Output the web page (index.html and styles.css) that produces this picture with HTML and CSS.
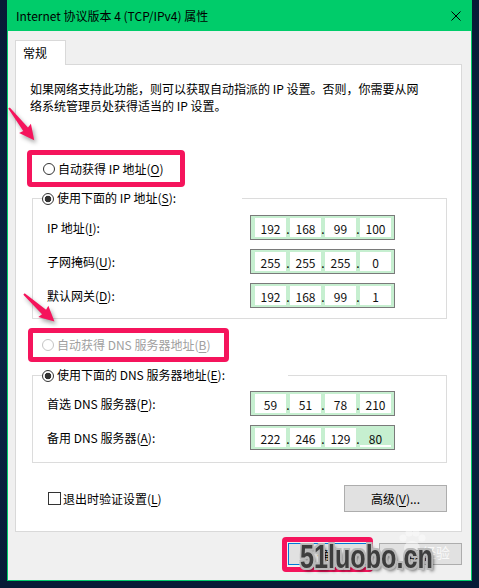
FILE: index.html
```html
<!DOCTYPE html>
<html lang="zh-CN">
<head>
  <meta charset="UTF-8">
  <title>Internet 协议版本 4 (TCP/IPv4) 属性</title>
  <link rel="stylesheet" href="styles.css">
</head>
<body>

  <div class="window">
    <div class="titlebar">
      <span class="title">Internet 协议版本 4 (TCP/IPv4) 属性</span>
      <svg class="close" width="10" height="10" viewBox="0 0 10 10"><path d="M0.5 0.5 L9.5 9.5 M9.5 0.5 L0.5 9.5" stroke="#000" stroke-width="1"/></svg>
    </div>

    <div class="client">
      <div class="tabs"><div class="tab">常规</div></div>

      <div class="panel">
        <p class="desc">如果网络支持此功能，则可以获取自动指派的 IP 设置。否则，你需要从网<br>络系统管理员处获得适当的 IP 设置。</p>

        <div class="opt auto-ip"><span class="radio"></span>自动获得 IP 地址(<u>O</u>)</div>

        <fieldset class="group g1">
          <legend><span class="radio on"></span>使用下面的 IP 地址(<u>S</u>):</legend>
          <div class="row">
            <span class="lbl">IP 地址(<u>I</u>):</span>
            <div class="ip"><span class="seg">192</span><span class="dot">.</span><span class="seg">168</span><span class="dot">.</span><span class="seg">99</span><span class="dot">.</span><span class="seg">100</span></div>
          </div>
          <div class="row">
            <span class="lbl">子网掩码(<u>U</u>):</span>
            <div class="ip"><span class="seg">255</span><span class="dot">.</span><span class="seg">255</span><span class="dot">.</span><span class="seg">255</span><span class="dot">.</span><span class="seg">0</span></div>
          </div>
          <div class="row">
            <span class="lbl">默认网关(<u>D</u>):</span>
            <div class="ip"><span class="seg">192</span><span class="dot">.</span><span class="seg">168</span><span class="dot">.</span><span class="seg">99</span><span class="dot">.</span><span class="seg">1</span></div>
          </div>
        </fieldset>

        <div class="opt dns-auto"><span class="radio off"></span>自动获得 DNS 服务器地址(<u>B</u>)</div>

        <fieldset class="group g2">
          <legend><span class="radio on"></span>使用下面的 DNS 服务器地址(<u>E</u>):</legend>
          <div class="row">
            <span class="lbl">首选 DNS 服务器(<u>P</u>):</span>
            <div class="ip"><span class="seg">59</span><span class="dot">.</span><span class="seg">51</span><span class="dot">.</span><span class="seg">78</span><span class="dot">.</span><span class="seg">210</span></div>
          </div>
          <div class="row">
            <span class="lbl">备用 DNS 服务器(<u>A</u>):</span>
            <div class="ip"><span class="seg">222</span><span class="dot">.</span><span class="seg">246</span><span class="dot">.</span><span class="seg">129</span><span class="dot">.</span><span class="seg sel">80</span></div>
          </div>
        </fieldset>

        <div class="foot">
          <label class="check"><span class="box"></span>退出时验证设置(<u>L</u>)</label>
          <button class="btn adv">高级(<u>V</u>)...</button>
        </div>
      </div>

      <div class="actions">
        <button class="btn ok">确定</button>
        <button class="btn">取消</button>
      </div>
    </div>
  </div>

  <!-- annotations drawn over the dialog -->
  <div class="mark m1"></div>
  <div class="mark m2"></div>
  <div class="mark m3"></div>

  <svg class="arrows" width="80" height="340" viewBox="0 0 80 340">
    <g transform="translate(9 108) rotate(52)">
      <path d="M0 -1 L27 -3 L26 -7.5 L41 0 L26 7.5 L27 3 L0 1 Z" fill="#f5145c"/>
    </g>
    <g transform="translate(24 294) rotate(42)">
      <path d="M0 -1 L27 -3 L26 -7.5 L41 0 L26 7.5 L27 3 L0 1 Z" fill="#f5145c"/>
    </g>
  </svg>

  <svg class="paw" width="30" height="30" viewBox="0 0 30 30">
    <circle cx="7" cy="9" r="3.5" fill="#fff"/>
    <circle cx="13" cy="4" r="3.5" fill="#fff"/>
    <circle cx="20" cy="4" r="3.5" fill="#fff"/>
    <circle cx="26" cy="9" r="3.5" fill="#fff"/>
    <ellipse cx="16" cy="19" rx="8" ry="7" fill="#fff"/>
  </svg>
  <span class="jy">经验</span>
  <span class="wm">51luobo.cn</span>

</body>
</html>
```

FILE: styles.css
```css
body {
  margin: 0;
  position: relative;
  height: 588px;
  overflow: hidden;
  background: linear-gradient(180deg, #071b36 0%, #0a2546 60%, #071b36 100%);
  font-family: "Noto Sans CJK SC", "Noto Sans", sans-serif;
  font-size: 12px;
  color: #000;
}

u {
  text-decoration-thickness: 1px;
  text-underline-offset: 2px;
}

.window {
  margin-left: 7px;
  width: 465px;
  height: 581px;
  box-sizing: border-box;
  border: 1px solid #00cc6a;
  background: #f0f0f0;
}

.titlebar {
  height: 30px;
  background: #00cc6a;
  display: flex;
  align-items: center;
  justify-content: space-between;
  padding: 0 10px 0 8px;
}

.title {
  line-height: 30px;
}

.client {
  padding: 9px 0 0 7px;
}

.tabs {
  height: 24px;
}

.tab {
  position: relative;
  z-index: 1;
  width: 51px;
  height: 25px;
  box-sizing: border-box;
  border: 1px solid #d9d9d9;
  border-bottom: none;
  background: #fff;
  padding-left: 7px;
  line-height: 23px;
}

.panel {
  width: 447px;
  height: 468px;
  box-sizing: border-box;
  border: 1px solid #d9d9d9;
  background: #fff;
  padding: 15px 14px 0 14px;
}

.desc {
  margin: 0;
  line-height: 17px;
}

.opt {
  display: flex;
  align-items: center;
  height: 18px;
  line-height: 18px;
  margin-left: 13px;
}

.auto-ip {
  margin-top: 46px;
}

.dns-auto {
  margin-top: 17px;
  margin-left: 12px;
  color: #a0a0a0;
}

.radio {
  display: inline-block;
  width: 12px;
  height: 12px;
  box-sizing: border-box;
  border: 1px solid #333;
  border-radius: 50%;
  background: #fff;
  margin-right: 3px;
  vertical-align: -2px;
}

.radio.on {
  background: radial-gradient(circle at center, #333 3px, #fff 3.6px);
}

.radio.off {
  border-color: #c4c4c4;
}

.group {
  margin: 11px 0 0 2px;
  padding: 0 0 10px 0;
  border: 1px solid #dcdcdc;
  min-width: 0;
}

.g2 {
  margin-top: 12px;
  padding-bottom: 12px;
}

.group legend {
  padding: 0;
  margin-left: 9px;
  height: 18px;
  line-height: 18px;
  width: 200px;
  white-space: nowrap;
}

.g2 legend {
  width: 246px;
}

.row {
  display: flex;
  align-items: center;
  height: 25px;
  margin: 9px 0 0 14px;
}

.g1 .row:first-of-type {
  margin-top: 8px;
}

.g2 .row:first-of-type {
  margin-top: 7px;
}

.lbl {
  width: 203px;
}

.ip {
  display: flex;
  width: 145px;
  height: 25px;
  box-sizing: border-box;
  border: 1px solid #7a7a7a;
  background: #c6efd0;
  padding: 2px 3px 2px 4px;
}

.seg {
  width: 31px;
  background: #fff;
  text-align: center;
  line-height: 21px;
  color: #111;
}

.seg.sel {
  background: linear-gradient(180deg, #c6efd0 0 17px, #fff 17px);
}

.dot {
  width: 4px;
  text-align: center;
  line-height: 21px;
}

.foot {
  display: flex;
  align-items: center;
  justify-content: space-between;
  margin: 22px 0 0 18px;
}

.check {
  display: flex;
  align-items: center;
}

.box {
  width: 13px;
  height: 13px;
  box-sizing: border-box;
  border: 1px solid #333;
  margin-right: 2px;
}

.btn {
  font: inherit;
  color: #000;
  background: #e1e1e1;
  border: 1px solid #adadad;
  padding: 0;
}

.adv {
  width: 103px;
  height: 27px;
}

.actions {
  display: flex;
  justify-content: flex-end;
  gap: 8px;
  margin-top: 11px;
  padding-right: 9px;
}

.actions .btn {
  width: 83px;
  height: 22px;
}

.ok {
  border-color: #0078d7;
}

.mark {
  position: absolute;
  box-sizing: border-box;
  border: 5px solid #f5145c;
  border-radius: 4px;
}

.m1 { left: 27px; top: 150px; width: 158px; height: 37px; }
.m2 { left: 28px; top: 328px; width: 201px; height: 34px; }
.m3 { left: 282px; top: 537px; width: 91px; height: 35px; }

.arrows {
  position: absolute;
  left: 0;
  top: 0;
  filter: drop-shadow(2px 3px 2px rgba(0, 0, 0, 0.35));
}

.paw {
  position: absolute;
  left: 396px;
  top: 529px;
  opacity: 0.45;
}

.jy {
  position: absolute;
  left: 422px;
  top: 543px;
  font-size: 14px;
  line-height: 18px;
  color: rgba(255, 255, 255, 0.8);
}

.wm {
  position: absolute;
  left: 300px;
  top: 536px;
  font-family: "Liberation Sans", sans-serif;
  font-size: 34px;
  font-weight: bold;
  line-height: 40px;
  color: #3d3d3d;
  transform: scaleX(0.74);
  transform-origin: left top;
  text-shadow:
    -2px -2px 0 #b9b9b9, 2px -2px 0 #b9b9b9, -2px 2px 0 #b9b9b9, 2px 2px 0 #b9b9b9,
    0 -2px 0 #b9b9b9, 0 2px 0 #b9b9b9, -2px 0 0 #b9b9b9, 2px 0 0 #b9b9b9,
    3px 3px 4px rgba(0, 0, 0, 0.6);
}
```
